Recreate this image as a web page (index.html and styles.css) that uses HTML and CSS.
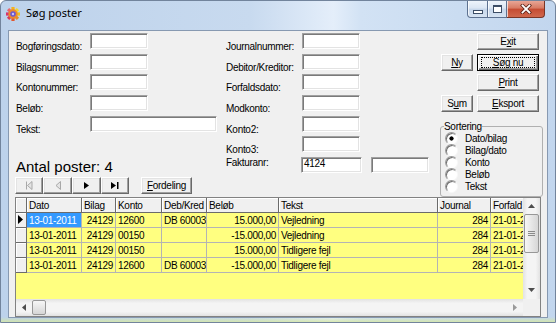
FILE: index.html
```html
<!DOCTYPE html>
<html lang="da">
<head>
    <meta charset="UTF-8">
    <title>Søg poster</title>
    <link rel="stylesheet" href="styles.css">
</head>
<body>

<div class="window">
    <div class="titlebar">
        <svg class="app-icon" width="14" height="14" viewBox="0 0 14 14">
            <g transform="translate(7 7)">
                <rect x="-1.6" y="-7" width="3.2" height="4" fill="#f5b21e"/>
                <rect x="-1.6" y="-7" width="3.2" height="4" fill="#f3d52c" transform="rotate(45)"/>
                <rect x="-1.6" y="-7" width="3.2" height="4" fill="#f1c21f" transform="rotate(90)"/>
                <rect x="-1.6" y="-7" width="3.2" height="4" fill="#ea8d22" transform="rotate(135)"/>
                <rect x="-1.6" y="-7" width="3.2" height="4" fill="#e2572e" transform="rotate(180)"/>
                <rect x="-1.6" y="-7" width="3.2" height="4" fill="#da3a55" transform="rotate(225)"/>
                <rect x="-1.6" y="-7" width="3.2" height="4" fill="#d8356a" transform="rotate(270)"/>
                <rect x="-1.6" y="-7" width="3.2" height="4" fill="#e8656c" transform="rotate(315)"/>
                <circle r="4.7" fill="#ec8a2e"/>
                <circle r="2.8" fill="#6c58cf"/>
                <circle r="1.2" fill="#cbc3f4"/>
            </g>
        </svg>
        <span class="title">Søg poster</span>
        <div class="controls">
            <span class="ctl min"><i></i></span>
            <span class="ctl max"><i></i></span>
            <span class="ctl close">
                <svg width="12" height="10" viewBox="0 0 12 10">
                    <path d="M2.5 1.5 L9.5 8.5 M9.5 1.5 L2.5 8.5" stroke="#5b2218" stroke-width="3.4" stroke-linecap="square"/>
                    <path d="M2.5 1.5 L9.5 8.5 M9.5 1.5 L2.5 8.5" stroke="#fff" stroke-width="1.8" stroke-linecap="square"/>
                </svg>
            </span>
        </div>
    </div>

    <div class="client">
        <div class="top">
            <div class="col-left">
                <div class="fields">
                    <div class="row"><label>Bogføringsdato:</label><span class="box"></span></div>
                    <div class="row"><label>Bilagsnummer:</label><span class="box"></span></div>
                    <div class="row"><label>Kontonummer:</label><span class="box"></span></div>
                    <div class="row"><label>Beløb:</label><span class="box"></span></div>
                    <div class="row"><label>Tekst:</label><span class="box wide"></span></div>
                </div>
                <div class="count">Antal poster: 4</div>
                <div class="nav">
                    <button class="btn navbtn" disabled>
                        <svg width="8" height="9" viewBox="0 0 8 9"><path d="M1.5 0.5 V8.5 M7 0.5 L2.5 4.5 L7 8.5 Z" fill="#e4e4e4" stroke="#a8a8a8"/></svg>
                    </button>
                    <button class="btn navbtn wide" disabled>
                        <svg width="6" height="9" viewBox="0 0 6 9"><path d="M5.5 0.5 L1 4.5 L5.5 8.5 Z" fill="#e4e4e4" stroke="#a8a8a8"/></svg>
                    </button>
                    <button class="btn navbtn wide">
                        <svg width="5" height="7" viewBox="0 0 5 7"><path d="M0 0 L5 3.5 L0 7 Z" fill="#000"/></svg>
                    </button>
                    <button class="btn navbtn">
                        <svg width="8" height="7" viewBox="0 0 8 7"><path d="M0 0 L5 3.5 L0 7 Z M6 0 H7.5 V7 H6 Z" fill="#000"/></svg>
                    </button>
                    <button class="btn fordeling"><u>F</u>ordeling</button>
                </div>
            </div>

            <div class="col-mid">
                <div class="fields">
                    <div class="row"><label>Journalnummer:</label><span class="box"></span></div>
                    <div class="row"><label>Debitor/Kreditor:</label><span class="box"></span></div>
                    <div class="row"><label>Forfaldsdato:</label><span class="box"></span></div>
                    <div class="row"><label>Modkonto:</label><span class="box"></span></div>
                    <div class="row"><label>Konto2:</label><span class="box"></span></div>
                    <div class="row"><label>Konto3:</label><span class="box"></span></div>
                    <div class="row fak"><label>Fakturanr:</label><span class="box invoice">4124</span><span class="box second"></span></div>
                </div>
            </div>

            <div class="col-right">
                <div class="actions">
                    <button class="btn col2">E<u>x</u>it</button>
                    <button class="btn"><u>N</u>y</button>
                    <button class="btn default"><span class="focus"><u>S</u>øg nu</span></button>
                    <button class="btn col2"><u>P</u>rint</button>
                    <button class="btn">S<u>u</u>m</button>
                    <button class="btn"><u>E</u>ksport</button>
                </div>
                <fieldset class="sort">
                    <legend>Sortering</legend>
                    <div class="radio on">Dato/bilag</div>
                    <div class="radio">Bilag/dato</div>
                    <div class="radio">Konto</div>
                    <div class="radio">Beløb</div>
                    <div class="radio">Tekst</div>
                </fieldset>
            </div>
        </div>

        <div class="grid">
            <div class="data">
                <div class="tr head">
                    <span class="ind"></span><span>Dato</span><span>Bilag</span><span>Konto</span><span>Deb/Kred</span><span>Beløb</span><span>Tekst</span><span>Journal</span><span>Forfald</span>
                </div>
                <div class="tr">
                    <span class="ind"><svg width="5" height="9" viewBox="0 0 5 9"><path d="M0 0 L5 4.5 L0 9 Z" fill="#000"/></svg></span>
                    <span class="sel">13-01-2011</span><span class="num">24129</span><span>12600</span><span>DB 60003</span><span class="num">15.000,00</span><span>Vejledning</span><span class="num">284</span><span>21-01-2011</span>
                </div>
                <div class="tr">
                    <span class="ind"></span>
                    <span>13-01-2011</span><span class="num">24129</span><span>00150</span><span></span><span class="num">-15.000,00</span><span>Vejledning</span><span class="num">284</span><span>21-01-2011</span>
                </div>
                <div class="tr">
                    <span class="ind"></span>
                    <span>13-01-2011</span><span class="num">24129</span><span>00150</span><span></span><span class="num">15.000,00</span><span>Tidligere fejl</span><span class="num">284</span><span>21-01-2011</span>
                </div>
                <div class="tr">
                    <span class="ind"></span>
                    <span>13-01-2011</span><span class="num">24129</span><span>12600</span><span>DB 60003</span><span class="num">-15.000,00</span><span>Tidligere fejl</span><span class="num">284</span><span>21-01-2011</span>
                </div>
            </div>

            <div class="vscroll">
                <span class="sb-btn"><svg width="7" height="4" viewBox="0 0 7 4"><path d="M0 4 L3.5 0 L7 4 Z" fill="#4d4d4d"/></svg></span>
                <span class="thumb-v">
                    <svg width="7" height="5" viewBox="0 0 7 5"><path d="M0 0.5 H7 M0 2.5 H7 M0 4.5 H7" stroke="#8a8a8a"/></svg>
                </span>
                <span class="track"></span>
                <span class="sb-btn"><svg width="7" height="4" viewBox="0 0 7 4"><path d="M0 0 L3.5 4 L7 0 Z" fill="#4d4d4d"/></svg></span>
            </div>

            <div class="hscroll">
                <span class="sb-btn"><svg width="4" height="7" viewBox="0 0 4 7"><path d="M4 0 L0 3.5 L4 7 Z" fill="#4d4d4d"/></svg></span>
                <span class="thumb-h"></span>
                <span class="track"></span>
                <span class="sb-btn"><svg width="4" height="7" viewBox="0 0 4 7"><path d="M0 0 L4 3.5 L0 7 Z" fill="#9a9a9a"/></svg></span>
            </div>

            <div class="corner"></div>
        </div>
    </div>
</div>

</body>
</html>
```

FILE: styles.css
```css
* {
    box-sizing: border-box;
}

body {
    margin: 0;
    background: #fff;
    font-family: "Liberation Sans", Arial, sans-serif;
    font-size: 10px;
    letter-spacing: -0.3px;
    color: #000;
}

/* window frame */

.window {
    width: 556px;
    height: 323px;
    border: 1px solid #72849c;
    border-radius: 6px 6px 0 0;
    padding: 0 7px 4px;
    display: flex;
    flex-direction: column;
    background:
        linear-gradient(to top, rgba(214, 232, 160, 0.8), rgba(214, 232, 160, 0) 5px),
        linear-gradient(to right, #bdd2eb 0%, #c8daef 45%, #e4eefa 60%, #d2e2f4 65%, #c2d6ee 100%);
}

.titlebar {
    height: 29px;
    display: flex;
    align-items: flex-start;
}

.app-icon {
    margin: 6px 0 0 -2px;
}

.title {
    margin: 4px 0 0 6px;
    font-family: "Noto Sans", "Liberation Sans", sans-serif;
    font-size: 11px;
    letter-spacing: 0;
    line-height: 15px;
}

.controls {
    margin-left: auto;
    margin-right: 3px;
    display: flex;
}

.ctl {
    height: 17px;
    display: flex;
    align-items: center;
    justify-content: center;
    border: 1px solid #5d7190;
    border-top: 0;
    border-left: 0;
    background: linear-gradient(#eef4fb, #dbe6f3 45%, #c6d6ea 50%, #d6e3f2);
    box-shadow: inset 1px 0 0 rgba(255, 255, 255, 0.7);
}

.ctl.min {
    width: 21px;
    border-left: 1px solid #5d7190;
    border-radius: 0 0 0 4px;
}

.ctl.min i {
    width: 10px;
    height: 4px;
    margin-top: 6px;
    background: #fff;
    border: 1px solid #3c4d66;
}

.ctl.max {
    width: 19px;
}

.ctl.max i {
    width: 9px;
    height: 8px;
    background: #fff;
    border: 1px solid #3c4d66;
    border-top-width: 2px;
}

.ctl.close {
    width: 38px;
    border-color: #7a3526;
    border-radius: 0 0 4px 0;
    background: linear-gradient(#e8a595, #d77a63 45%, #c54b32 50%, #d0674c);
}

/* client area */

.client {
    height: 288px;
    border: 1px solid #8799b1;
    background: #f0f0f0;
    display: flex;
    flex-direction: column;
}

.top {
    display: grid;
    grid-template-columns: 210px 214px 103px;
    padding: 2px 0 0 7px;
}

.fields {
    display: flex;
    flex-direction: column;
    gap: 4.67px;
}

.row {
    display: flex;
    height: 16px;
}

.row label {
    width: 74px;
    padding-top: 8px;
    line-height: 12px;
    white-space: nowrap;
}

.col-mid .row label {
    width: 76px;
}

.row.fak label {
    padding-top: 0;
}

.box {
    width: 58px;
    height: 16px;
    padding: 0 2px;
    line-height: 12px;
    background: #fff;
    border: 1px solid;
    border-color: #a0a0a0 #fff #fff #a0a0a0;
    box-shadow: inset 1px 1px 0 #7a7a7a, inset -1px -1px 0 #e3e3e3;
}

.box.wide {
    width: 127px;
}

.box.invoice {
    width: 61px;
    margin-left: -1px;
}

.box.second {
    margin-left: 9px;
}

.count {
    margin-top: 26px;
    font-size: 15px;
    letter-spacing: 0;
    line-height: 17px;
}

.nav {
    display: flex;
    height: 17px;
    margin: 2px 0 0 -1px;
}

/* buttons */

.btn {
    font: inherit;
    letter-spacing: inherit;
    color: #000;
    height: 17px;
    padding: 0;
    display: flex;
    align-items: center;
    justify-content: center;
    line-height: 13px;
    background: #f0f0f0;
    border: 1px solid;
    border-color: #fff #696969 #696969 #fff;
    box-shadow: inset -1px -1px 0 #a0a0a0, inset 1px 1px 0 #e3e3e3;
}

.navbtn {
    width: 28px;
}

.navbtn.wide {
    width: 29px;
}

.fordeling {
    width: 51px;
    margin-left: 12px;
}

.actions {
    display: grid;
    grid-template-columns: 32px 62px;
    grid-auto-rows: 17px;
    gap: 3.67px 4px;
    margin-left: 1px;
}

.actions .col2 {
    grid-column: 2;
}

.btn.default {
    border-color: #000;
    box-shadow: inset 1px 1px 0 #fff, inset -1px -1px 0 #696969, inset -2px -2px 0 #a0a0a0;
}

.btn.default .focus {
    align-self: stretch;
    flex: 1;
    margin: 2px 3px;
    border: 1px dotted #000;
    display: flex;
    align-items: center;
    justify-content: center;
}

/* sort options */

.sort {
    margin: 9px 0 0;
    padding: 0 0 3px 3px;
    min-width: 0;
    border: 1px solid #b0b0b0;
    border-radius: 3px;
}

.sort legend {
    padding: 0;
    line-height: 12px;
}

.radio {
    display: flex;
    align-items: center;
    height: 12px;
    line-height: 12px;
}

.radio::before {
    content: "";
    width: 11px;
    height: 11px;
    margin: 0 7px 0 1px;
    border-radius: 50%;
    border: 1px solid;
    border-color: #9a9a9a #f8f8f8 #f8f8f8 #9a9a9a;
    box-shadow: inset 1px 1px 0 #707070;
    background: #fff;
}

.radio.on::before {
    background: radial-gradient(circle, #000 0 1.8px, #fff 2.4px);
}

/* record grid */

.grid {
    margin-left: 6px;
    width: 526px;
    height: 120px;
    border: 1px solid #828282;
    display: grid;
    grid-template-columns: 507px 17px;
    grid-template-rows: 101px 17px;
}

.data {
    overflow: hidden;
    background: #ffff80;
}

.tr {
    display: grid;
    grid-template-columns: 11px 55px 34px 46px 45px 72px 159px 53px 64px;
    height: 15px;
}

.tr > span {
    padding: 0 2px;
    line-height: 15px;
    white-space: nowrap;
    overflow: hidden;
    border-right: 1px solid #b4b4b4;
    border-bottom: 1px solid #b4b4b4;
}

.tr.head > span,
.tr > .ind {
    background: #f0f0f0;
    border-color: #6b6b6b;
    box-shadow: inset 1px 1px 0 #fff;
}

.tr > .ind {
    padding: 0 0 0 2px;
    display: flex;
    align-items: center;
}

.tr > .num {
    text-align: right;
}

.tr > .sel {
    background: #3399ff;
    color: #fff;
}

/* scroll bars */

.vscroll {
    display: flex;
    flex-direction: column;
    background: linear-gradient(to right, #e2e2e2, #f4f4f4 25%, #f4f4f4 75%, #e2e2e2);
}

.hscroll {
    display: flex;
    background: linear-gradient(#e2e2e2, #f4f4f4 25%, #f4f4f4 75%, #e2e2e2);
}

.sb-btn {
    height: 17px;
    flex: none;
    display: flex;
    align-items: center;
    justify-content: center;
}

.hscroll .sb-btn {
    width: 16px;
    height: auto;
}

.track {
    flex: 1;
}

.thumb-v {
    height: 39px;
    margin: -1px 1px 0;
    display: flex;
    align-items: center;
    justify-content: center;
    border: 1px solid #979797;
    border-radius: 2px;
    background: linear-gradient(to right, #f6f6f6, #e6e6e6 50%, #d6d6d6);
}

.thumb-h {
    width: 14px;
    margin: 1px 0;
    border: 1px solid #979797;
    border-radius: 2px;
    background: linear-gradient(#f6f6f6, #e6e6e6 50%, #d6d6d6);
}

.corner {
    background: #f0f0f0;
}
```
